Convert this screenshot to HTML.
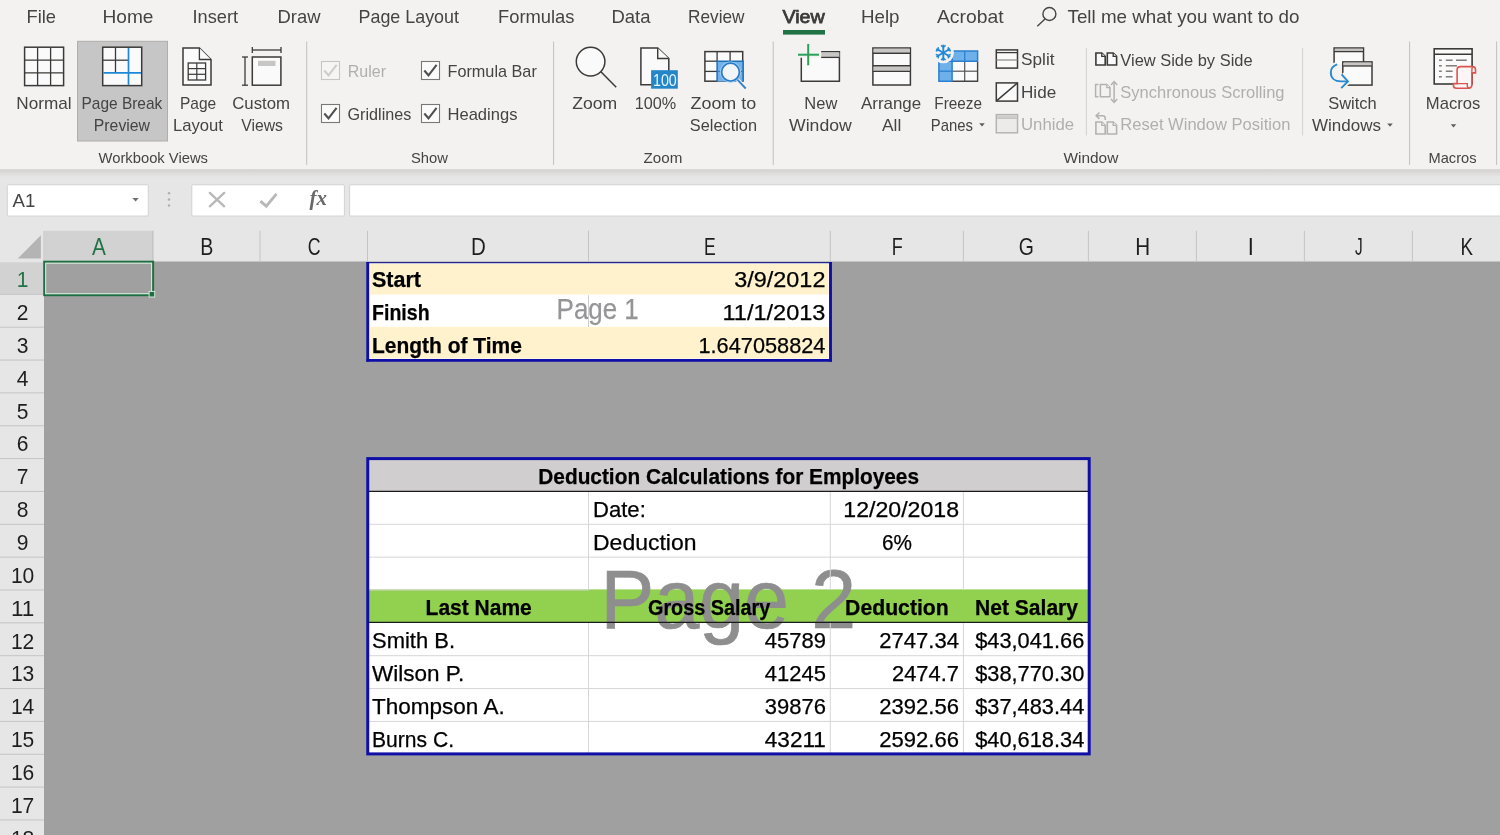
<!DOCTYPE html>
<html lang="en">
<head>
<meta charset="utf-8">
<title>Excel - Page Break Preview</title>
<style>
html,body{margin:0;padding:0;background:#a0a0a0;overflow:hidden;}
body{width:1500px;height:835px;font-family:"Liberation Sans",Arial,sans-serif;}
svg{display:block;position:absolute;left:0;top:0;will-change:transform;}
svg text{font-family:"Liberation Sans",Arial,sans-serif;white-space:pre;}
</style>
</head>
<body>
<svg width="1500" height="835" viewBox="0 0 1500 835">
<defs><linearGradient id="shadow" x1="0" y1="0" x2="0" y2="1"><stop offset="0" stop-color="#d0cecc"/><stop offset="1" stop-color="#e6e6e6"/></linearGradient></defs>
<rect x="0.00" y="0.00" width="1500.00" height="835.00" fill="#a0a0a0"/>
<rect x="0.00" y="160.00" width="1500.00" height="101.50" fill="#e6e6e6"/>
<rect x="0.00" y="168.00" width="1500.00" height="9.00" fill="url(#shadow)"/>
<rect x="0.00" y="0.00" width="1500.00" height="169.20" fill="#f3f2f1"/>
<rect x="0.00" y="261.00" width="44.00" height="574.00" fill="#e6e6e6"/>
<text x="26.5" y="23.4" font-size="19" fill="#444444" textLength="29.5" lengthAdjust="spacingAndGlyphs">File</text>
<text x="102.5" y="23.4" font-size="19" fill="#444444" textLength="51.0" lengthAdjust="spacingAndGlyphs">Home</text>
<text x="192.5" y="23.4" font-size="19" fill="#444444" textLength="45.5" lengthAdjust="spacingAndGlyphs">Insert</text>
<text x="277.5" y="23.4" font-size="19" fill="#444444" textLength="43.0" lengthAdjust="spacingAndGlyphs">Draw</text>
<text x="358.5" y="23.4" font-size="19" fill="#444444" textLength="100.5" lengthAdjust="spacingAndGlyphs">Page Layout</text>
<text x="498.0" y="23.4" font-size="19" fill="#444444" textLength="76.5" lengthAdjust="spacingAndGlyphs">Formulas</text>
<text x="611.5" y="23.4" font-size="19" fill="#444444" textLength="39.0" lengthAdjust="spacingAndGlyphs">Data</text>
<text x="688.0" y="23.4" font-size="19" fill="#444444" textLength="56.5" lengthAdjust="spacingAndGlyphs">Review</text>
<text x="861.0" y="23.4" font-size="19" fill="#444444" textLength="38.5" lengthAdjust="spacingAndGlyphs">Help</text>
<text x="937.0" y="23.4" font-size="19" fill="#444444" textLength="66.5" lengthAdjust="spacingAndGlyphs">Acrobat</text>
<text x="1067.5" y="23.4" font-size="19" fill="#444444" textLength="232.0" lengthAdjust="spacingAndGlyphs">Tell me what you want to do</text>
<text x="782.4" y="23.4" font-size="19" fill="#3a3a3a" textLength="42.4" lengthAdjust="spacingAndGlyphs" stroke="#3a3a3a" stroke-width="0.75">View</text>
<rect x="783.00" y="30.00" width="42.00" height="4.60" fill="#217346"/>
<circle cx="1049.4" cy="14" r="6.5" fill="none" stroke="#444" stroke-width="1.4"/>
<line x1="1045.00" y1="19.00" x2="1037.30" y2="26.30" stroke="#444" stroke-width="1.4"/>
<line x1="306.70" y1="41.50" x2="306.70" y2="165.00" stroke="#c2c0be" stroke-width="1"/>
<line x1="553.60" y1="41.50" x2="553.60" y2="165.00" stroke="#c2c0be" stroke-width="1"/>
<line x1="773.20" y1="41.50" x2="773.20" y2="165.00" stroke="#c2c0be" stroke-width="1"/>
<line x1="1409.60" y1="41.50" x2="1409.60" y2="165.00" stroke="#c2c0be" stroke-width="1"/>
<line x1="1496.60" y1="41.50" x2="1496.60" y2="165.00" stroke="#c2c0be" stroke-width="1"/>
<line x1="1086.40" y1="48.00" x2="1086.40" y2="135.50" stroke="#d4d2d0" stroke-width="1"/>
<line x1="1302.60" y1="48.00" x2="1302.60" y2="135.50" stroke="#d4d2d0" stroke-width="1"/>
<text x="98.5" y="163.0" font-size="14.5" fill="#444444" textLength="109.5" lengthAdjust="spacingAndGlyphs">Workbook Views</text>
<text x="411.0" y="163.0" font-size="14.5" fill="#444444" textLength="37.0" lengthAdjust="spacingAndGlyphs">Show</text>
<text x="643.5" y="163.0" font-size="14.5" fill="#444444" textLength="38.8" lengthAdjust="spacingAndGlyphs">Zoom</text>
<text x="1063.5" y="163.0" font-size="14.5" fill="#444444" textLength="54.8" lengthAdjust="spacingAndGlyphs">Window</text>
<text x="1428.5" y="163.0" font-size="14.5" fill="#444444" textLength="48.0" lengthAdjust="spacingAndGlyphs">Macros</text>
<rect x="77.50" y="41.30" width="90.00" height="99.70" fill="#c6c6c6" stroke="#b0aeac" stroke-width="1"/>
<text x="16.3" y="109.0" font-size="17" fill="#444444" textLength="55.3" lengthAdjust="spacingAndGlyphs">Normal</text>
<text x="81.5" y="109.0" font-size="17" fill="#444444" textLength="80.8" lengthAdjust="spacingAndGlyphs">Page Break</text>
<text x="93.8" y="131.0" font-size="17" fill="#444444" textLength="56.2" lengthAdjust="spacingAndGlyphs">Preview</text>
<text x="180.0" y="109.0" font-size="17" fill="#444444" textLength="36.2" lengthAdjust="spacingAndGlyphs">Page</text>
<text x="173.0" y="131.0" font-size="17" fill="#444444" textLength="50.0" lengthAdjust="spacingAndGlyphs">Layout</text>
<text x="232.2" y="109.0" font-size="17" fill="#444444" textLength="57.8" lengthAdjust="spacingAndGlyphs">Custom</text>
<text x="241.2" y="131.0" font-size="17" fill="#444444" textLength="41.8" lengthAdjust="spacingAndGlyphs">Views</text>
<text x="572.3" y="109.0" font-size="17" fill="#444444" textLength="45.0" lengthAdjust="spacingAndGlyphs">Zoom</text>
<text x="634.8" y="109.0" font-size="17" fill="#444444" textLength="41.4" lengthAdjust="spacingAndGlyphs">100%</text>
<text x="690.5" y="109.0" font-size="17" fill="#444444" textLength="65.7" lengthAdjust="spacingAndGlyphs">Zoom to</text>
<text x="689.8" y="131.0" font-size="17" fill="#444444" textLength="67.2" lengthAdjust="spacingAndGlyphs">Selection</text>
<text x="804.3" y="109.0" font-size="17" fill="#444444" textLength="33.0" lengthAdjust="spacingAndGlyphs">New</text>
<text x="789.0" y="131.0" font-size="17" fill="#444444" textLength="62.8" lengthAdjust="spacingAndGlyphs">Window</text>
<text x="861.0" y="109.0" font-size="17" fill="#444444" textLength="60.2" lengthAdjust="spacingAndGlyphs">Arrange</text>
<text x="882.0" y="131.0" font-size="17" fill="#444444" textLength="19.3" lengthAdjust="spacingAndGlyphs">All</text>
<text x="934.3" y="109.0" font-size="17" fill="#444444" textLength="47.7" lengthAdjust="spacingAndGlyphs">Freeze</text>
<text x="930.8" y="131.0" font-size="17" fill="#444444" textLength="42.2" lengthAdjust="spacingAndGlyphs">Panes</text>
<text x="1328.2" y="109.0" font-size="17" fill="#444444" textLength="48.5" lengthAdjust="spacingAndGlyphs">Switch</text>
<text x="1312.0" y="131.0" font-size="17" fill="#444444" textLength="69.0" lengthAdjust="spacingAndGlyphs">Windows</text>
<text x="1425.8" y="109.0" font-size="17" fill="#444444" textLength="54.5" lengthAdjust="spacingAndGlyphs">Macros</text>
<path d="M979.20 123.20h5.6l-2.80 3.2z" fill="#605e5c"/>
<path d="M1387.20 123.60h5.6l-2.80 3.2z" fill="#605e5c"/>
<path d="M1450.70 124.20h5.6l-2.80 3.2z" fill="#605e5c"/>
<text x="1021.0" y="65.0" font-size="17" fill="#444444" textLength="33.5" lengthAdjust="spacingAndGlyphs">Split</text>
<text x="1021.0" y="98.0" font-size="17" fill="#444444" textLength="35.2" lengthAdjust="spacingAndGlyphs">Hide</text>
<text x="1021.0" y="130.0" font-size="17" fill="#b1afad" textLength="53.2" lengthAdjust="spacingAndGlyphs">Unhide</text>
<text x="1120.3" y="66.0" font-size="17" fill="#444444" textLength="132.3" lengthAdjust="spacingAndGlyphs">View Side by Side</text>
<text x="1120.3" y="98.0" font-size="17" fill="#b1afad" textLength="164.2" lengthAdjust="spacingAndGlyphs">Synchronous Scrolling</text>
<text x="1120.3" y="130.0" font-size="17" fill="#b1afad" textLength="170.1" lengthAdjust="spacingAndGlyphs">Reset Window Position</text>
<rect x="321.50" y="61.50" width="18.00" height="18.00" fill="#f6f5f4" stroke="#c8c6c4" stroke-width="1.1"/>
<path d="M324.3 70.5l4.2 4.8l8.1 -10.5" fill="none" stroke="#cfcdcb" stroke-width="2.1"/>
<text x="347.8" y="77.0" font-size="17" fill="#b1afad" textLength="38.2" lengthAdjust="spacingAndGlyphs">Ruler</text>
<rect x="421.50" y="61.50" width="18.00" height="18.00" fill="#fbfbfb" stroke="#7a7876" stroke-width="1.1"/>
<path d="M424.3 70.5l4.2 4.8l8.1 -10.5" fill="none" stroke="#505050" stroke-width="2.1"/>
<text x="447.5" y="77.0" font-size="17" fill="#444444" textLength="89.3" lengthAdjust="spacingAndGlyphs">Formula Bar</text>
<rect x="321.50" y="104.50" width="18.00" height="18.00" fill="#fbfbfb" stroke="#7a7876" stroke-width="1.1"/>
<path d="M324.3 113.5l4.2 4.8l8.1 -10.5" fill="none" stroke="#505050" stroke-width="2.1"/>
<text x="347.5" y="120.0" font-size="17" fill="#444444" textLength="63.8" lengthAdjust="spacingAndGlyphs">Gridlines</text>
<rect x="421.50" y="104.50" width="18.00" height="18.00" fill="#fbfbfb" stroke="#7a7876" stroke-width="1.1"/>
<path d="M424.3 113.5l4.2 4.8l8.1 -10.5" fill="none" stroke="#505050" stroke-width="2.1"/>
<text x="447.5" y="120.0" font-size="17" fill="#444444" textLength="69.9" lengthAdjust="spacingAndGlyphs">Headings</text>
<rect x="24.60" y="47.20" width="39.00" height="38.40" fill="#fafafa" stroke="#3b3a39" stroke-width="1.5"/>
<line x1="37.60" y1="47.20" x2="37.60" y2="85.60" stroke="#3b3a39" stroke-width="1.3"/>
<line x1="50.60" y1="47.20" x2="50.60" y2="85.60" stroke="#3b3a39" stroke-width="1.3"/>
<line x1="24.60" y1="60.20" x2="63.60" y2="60.20" stroke="#3b3a39" stroke-width="1.3"/>
<line x1="24.60" y1="72.80" x2="63.60" y2="72.80" stroke="#3b3a39" stroke-width="1.3"/>
<rect x="102.70" y="47.20" width="39.00" height="38.40" fill="#fafafa" stroke="#3b3a39" stroke-width="1.5"/>
<line x1="115.50" y1="47.20" x2="115.50" y2="72.80" stroke="#3b3a39" stroke-width="1.3"/>
<line x1="102.70" y1="60.20" x2="128.30" y2="60.20" stroke="#3b3a39" stroke-width="1.3"/>
<line x1="128.50" y1="47.90" x2="128.50" y2="84.90" stroke="#1e88d8" stroke-width="1.7"/>
<line x1="103.40" y1="72.80" x2="141.00" y2="72.80" stroke="#1e88d8" stroke-width="1.7"/>
<path d="M183 48.1h16.4l11.6 11.4v25.4h-28z" fill="#fafafa" stroke="#3b3a39" stroke-width="1.5"/>
<path d="M199.4 48.1v11.4h11.6" fill="#fafafa" stroke="#3b3a39" stroke-width="1.3"/>
<rect x="188.20" y="63.00" width="17.40" height="17.00" fill="none" stroke="#3b3a39" stroke-width="1.3"/>
<line x1="196.80" y1="63.00" x2="196.80" y2="80.00" stroke="#3b3a39" stroke-width="1.2"/>
<line x1="188.20" y1="68.60" x2="205.60" y2="68.60" stroke="#3b3a39" stroke-width="1.2"/>
<line x1="188.20" y1="74.30" x2="205.60" y2="74.30" stroke="#3b3a39" stroke-width="1.2"/>
<rect x="252.30" y="57.00" width="28.60" height="28.20" fill="#fafafa" stroke="#3b3a39" stroke-width="1.5"/>
<rect x="258.00" y="60.80" width="17.50" height="5.20" fill="#c8c6c4"/>
<line x1="252.30" y1="50.00" x2="281.00" y2="50.00" stroke="#3b3a39" stroke-width="1.3"/>
<line x1="252.30" y1="47.00" x2="252.30" y2="53.00" stroke="#3b3a39" stroke-width="1.3"/>
<line x1="281.00" y1="47.00" x2="281.00" y2="53.00" stroke="#3b3a39" stroke-width="1.3"/>
<line x1="245.00" y1="57.00" x2="245.00" y2="85.20" stroke="#3b3a39" stroke-width="1.3"/>
<line x1="242.00" y1="57.00" x2="248.00" y2="57.00" stroke="#3b3a39" stroke-width="1.3"/>
<line x1="242.00" y1="85.20" x2="248.00" y2="85.20" stroke="#3b3a39" stroke-width="1.3"/>
<circle cx="590.6" cy="61.6" r="14.3" fill="#fafafa" stroke="#3b3a39" stroke-width="1.5"/>
<line x1="600.90" y1="71.70" x2="616.20" y2="87.20" stroke="#3b3a39" stroke-width="1.5"/>
<path d="M640.9 48.1h16.8l11.1 10.4v26.3h-27.9z" fill="#fafafa" stroke="#3b3a39" stroke-width="1.5"/>
<path d="M657.7 48.1v10.4h11.1" fill="#fafafa" stroke="#3b3a39" stroke-width="1.4"/>
<rect x="651.10" y="70.20" width="26.70" height="18.50" fill="#2486c8"/>
<text x="653.0" y="86.0" font-size="17.4" fill="#e8f6ff" textLength="23.8" lengthAdjust="spacingAndGlyphs">100</text>
<rect x="704.90" y="51.60" width="37.80" height="29.60" fill="#fafafa" stroke="#3b3a39" stroke-width="1.5"/>
<rect x="717.10" y="61.20" width="26.00" height="20.40" fill="#72b2ea"/>
<line x1="717.10" y1="51.60" x2="717.10" y2="61.00" stroke="#3b3a39" stroke-width="1.3"/>
<line x1="730.10" y1="51.60" x2="730.10" y2="61.00" stroke="#3b3a39" stroke-width="1.3"/>
<line x1="704.90" y1="61.20" x2="717.00" y2="61.20" stroke="#3b3a39" stroke-width="1.3"/>
<line x1="704.90" y1="71.40" x2="717.00" y2="71.40" stroke="#3b3a39" stroke-width="1.3"/>
<path d="M717.1 81.6V61.2H743.1V81.6" fill="none" stroke="#1e70b8" stroke-width="1.5"/>
<line x1="717.10" y1="71.40" x2="722.00" y2="71.40" stroke="#2a7cc4" stroke-width="1.1"/>
<line x1="730.10" y1="61.20" x2="730.10" y2="63.40" stroke="#2a7cc4" stroke-width="1.1"/>
<line x1="740.00" y1="71.40" x2="743.00" y2="71.40" stroke="#2a7cc4" stroke-width="1.1"/>
<line x1="737.30" y1="79.60" x2="745.70" y2="88.50" stroke="#f3f2f1" stroke-width="4"/>
<circle cx="730.5" cy="72.1" r="10.6" fill="#9ccaf2"/>
<circle cx="730.5" cy="72.1" r="8.9" fill="#f2f5f8" stroke="#2a7cc4" stroke-width="1.7"/>
<line x1="737.40" y1="79.70" x2="745.70" y2="88.50" stroke="#3484c8" stroke-width="1.9"/>
<path d="M801.3 57.8V81.2H839.4V51.7H821.2V57.8z" fill="#fafafa"/>
<path d="M801.3 57.8V81.2H839.4V51.7H821.2" fill="none" stroke="#3b3a39" stroke-width="1.5"/>
<rect x="821.20" y="52.40" width="18.20" height="4.90" fill="#c8c6c4"/>
<line x1="821.20" y1="57.40" x2="839.40" y2="57.40" stroke="#3b3a39" stroke-width="1.3"/>
<line x1="798.00" y1="54.70" x2="819.00" y2="54.70" stroke="#2ca05a" stroke-width="2"/>
<line x1="808.20" y1="43.90" x2="808.20" y2="65.30" stroke="#2ca05a" stroke-width="2"/>
<rect x="872.90" y="48.00" width="37.50" height="37.00" fill="#fafafa" stroke="#3b3a39" stroke-width="1.5"/>
<rect x="873.60" y="48.70" width="36.10" height="4.00" fill="#c8c6c4"/>
<rect x="873.60" y="66.40" width="36.10" height="4.60" fill="#c8c6c4"/>
<line x1="872.90" y1="53.20" x2="910.40" y2="53.20" stroke="#3b3a39" stroke-width="1.4"/>
<line x1="872.90" y1="65.80" x2="910.40" y2="65.80" stroke="#3b3a39" stroke-width="1.6"/>
<line x1="872.90" y1="71.40" x2="910.40" y2="71.40" stroke="#3b3a39" stroke-width="1.4"/>
<rect x="938.90" y="51.00" width="38.70" height="30.30" fill="#fafafa"/>
<rect x="938.90" y="51.00" width="38.70" height="10.20" fill="#6eb0ea"/>
<rect x="938.90" y="51.00" width="13.20" height="30.30" fill="#6eb0ea"/>
<line x1="964.70" y1="61.20" x2="964.70" y2="81.30" stroke="#555555" stroke-width="1.2"/>
<line x1="952.10" y1="71.20" x2="977.60" y2="71.20" stroke="#555555" stroke-width="1.2"/>
<path d="M952.1 81.3H977.6V61.2" fill="none" stroke="#444" stroke-width="1.4"/>
<path d="M952.1 81.3H938.9V51H977.6V61.2" fill="none" stroke="#2a80d0" stroke-width="1.5"/>
<line x1="952.10" y1="51.00" x2="952.10" y2="81.30" stroke="#2a80d0" stroke-width="1.5"/>
<line x1="938.90" y1="61.20" x2="977.60" y2="61.20" stroke="#2a80d0" stroke-width="1.5"/>
<line x1="964.70" y1="51.00" x2="964.70" y2="61.20" stroke="#2a80d0" stroke-width="1.3"/>
<line x1="938.90" y1="71.20" x2="952.10" y2="71.20" stroke="#2a80d0" stroke-width="1.3"/>
<circle cx="943.3" cy="52.7" r="10.6" fill="#f3f2f1"/>
<line x1="943.30" y1="44.70" x2="943.30" y2="60.70" stroke="#2488d8" stroke-width="1.9"/>
<line x1="936.37" y1="48.70" x2="950.23" y2="56.70" stroke="#2488d8" stroke-width="1.9"/>
<line x1="950.23" y1="48.70" x2="936.37" y2="56.70" stroke="#2488d8" stroke-width="1.9"/>
<line x1="947.98" y1="55.40" x2="950.80" y2="54.37" stroke="#2488d8" stroke-width="1.4"/>
<line x1="947.98" y1="55.40" x2="948.50" y2="58.35" stroke="#2488d8" stroke-width="1.4"/>
<line x1="943.30" y1="58.10" x2="945.60" y2="60.03" stroke="#2488d8" stroke-width="1.4"/>
<line x1="943.30" y1="58.10" x2="941.00" y2="60.03" stroke="#2488d8" stroke-width="1.4"/>
<line x1="938.62" y1="55.40" x2="938.10" y2="58.35" stroke="#2488d8" stroke-width="1.4"/>
<line x1="938.62" y1="55.40" x2="935.80" y2="54.37" stroke="#2488d8" stroke-width="1.4"/>
<line x1="938.62" y1="50.00" x2="935.80" y2="51.03" stroke="#2488d8" stroke-width="1.4"/>
<line x1="938.62" y1="50.00" x2="938.10" y2="47.05" stroke="#2488d8" stroke-width="1.4"/>
<line x1="943.30" y1="47.30" x2="941.00" y2="45.37" stroke="#2488d8" stroke-width="1.4"/>
<line x1="943.30" y1="47.30" x2="945.60" y2="45.37" stroke="#2488d8" stroke-width="1.4"/>
<line x1="947.98" y1="50.00" x2="948.50" y2="47.05" stroke="#2488d8" stroke-width="1.4"/>
<line x1="947.98" y1="50.00" x2="950.80" y2="51.03" stroke="#2488d8" stroke-width="1.4"/>
<rect x="996.30" y="49.90" width="21.20" height="18.20" fill="#fafafa" stroke="#3b3a39" stroke-width="1.5"/>
<line x1="996.30" y1="52.60" x2="1017.50" y2="52.60" stroke="#3b3a39" stroke-width="1.3"/>
<line x1="996.30" y1="60.00" x2="1017.50" y2="60.00" stroke="#8a8886" stroke-width="1.2"/>
<rect x="996.30" y="82.90" width="21.20" height="18.20" fill="#fafafa" stroke="#3b3a39" stroke-width="1.5"/>
<line x1="996.80" y1="100.60" x2="1017.00" y2="83.40" stroke="#3b3a39" stroke-width="1.4"/>
<rect x="996.30" y="114.60" width="21.20" height="18.20" fill="#ecebea" stroke="#b6b4b2" stroke-width="1.5"/>
<rect x="997.00" y="115.30" width="19.80" height="3.00" fill="#cfcdcb"/>
<line x1="996.30" y1="118.40" x2="1017.50" y2="118.40" stroke="#c2c0be" stroke-width="1"/>
<path d="M1095.9 53h5.9l3.4 3.4v8.6h-9.3z" fill="#fafafa" stroke="#3b3a39" stroke-width="1.6"/>
<path d="M1101.8 53v3.4h3.4" fill="#fafafa" stroke="#3b3a39" stroke-width="1.36"/>
<path d="M1107.3 53h5.9l3.4 3.4v8.6h-9.3z" fill="#fafafa" stroke="#3b3a39" stroke-width="1.6"/>
<path d="M1113.1999999999998 53v3.4h3.4" fill="#fafafa" stroke="#3b3a39" stroke-width="1.36"/>
<path d="M1098.4 84.4h-2.8v12.4h2.8" fill="none" stroke="#b4b2b0" stroke-width="1.5"/>
<path d="M1100.4 84.4h6.3999999999999995l3.2 3.2v9.2h-9.6z" fill="#f3f2f1" stroke="#b4b2b0" stroke-width="1.5"/>
<path d="M1106.8 84.4v3.2h3.2" fill="#f3f2f1" stroke="#b4b2b0" stroke-width="1.275"/>
<line x1="1114.10" y1="81.80" x2="1114.10" y2="102.20" stroke="#b4b2b0" stroke-width="1.5"/>
<path d="M1111 85l3.1-3.4l3.1 3.4" fill="none" stroke="#b4b2b0" stroke-width="1.5"/>
<path d="M1111 99l3.1 3.4l3.1-3.4" fill="none" stroke="#b4b2b0" stroke-width="1.5"/>
<path d="M1095.9 122h5.9l3.4 3.4v8.6h-9.3z" fill="#f3f2f1" stroke="#b4b2b0" stroke-width="1.6"/>
<path d="M1101.8 122v3.4h3.4" fill="#f3f2f1" stroke="#b4b2b0" stroke-width="1.36"/>
<path d="M1107.3 122h5.9l3.4 3.4v8.6h-9.3z" fill="#f3f2f1" stroke="#b4b2b0" stroke-width="1.6"/>
<path d="M1113.1999999999998 122v3.4h3.4" fill="#f3f2f1" stroke="#b4b2b0" stroke-width="1.36"/>
<path d="M1105.3 120v-1.6q0-2.7-2.8-2.7h-6" fill="none" stroke="#b4b2b0" stroke-width="1.5"/>
<path d="M1099.4 112.5l-3.3 3.2l3.3 3.2" fill="none" stroke="#b4b2b0" stroke-width="1.5"/>
<rect x="1334.10" y="48.00" width="29.40" height="16.00" fill="#fafafa"/>
<path d="M1334.1 63V48H1363.5V62" fill="none" stroke="#3b3a39" stroke-width="1.5"/>
<rect x="1334.80" y="48.70" width="28.00" height="3.00" fill="#c8c6c4"/>
<line x1="1334.10" y1="51.60" x2="1363.50" y2="51.60" stroke="#3b3a39" stroke-width="1.3"/>
<rect x="1342.80" y="61.90" width="29.20" height="23.20" fill="#fafafa" stroke="#3b3a39" stroke-width="1.5"/>
<rect x="1343.50" y="62.60" width="27.80" height="3.40" fill="#c8c6c4"/>
<line x1="1342.80" y1="66.00" x2="1372.00" y2="66.00" stroke="#3b3a39" stroke-width="1.3"/>
<path d="M1337.2 64.4C1332.6 66 1330.8 69 1330.8 72.4C1330.8 78 1334.8 81.4 1341 81.4H1347" fill="none" stroke="#f3f2f1" stroke-width="5.4"/>
<path d="M1341.6 74.4L1347.9 81.4L1341.2 88.2" fill="none" stroke="#f3f2f1" stroke-width="5.4"/>
<rect x="1333.00" y="72.80" width="8.00" height="16.00" fill="#f3f2f1"/>
<path d="M1337.2 64.4C1332.6 66 1330.8 69 1330.8 72.4C1330.8 78 1334.8 81.4 1341 81.4H1347" fill="none" stroke="#2a88d0" stroke-width="1.9"/>
<path d="M1341.6 74.4L1347.9 81.4L1341.2 88.2" fill="none" stroke="#2a88d0" stroke-width="1.9"/>
<rect x="1434.20" y="48.80" width="37.90" height="35.20" fill="#fafafa" stroke="#3b3a39" stroke-width="1.6"/>
<line x1="1434.20" y1="54.20" x2="1472.10" y2="54.20" stroke="#3b3a39" stroke-width="1.4"/>
<line x1="1439.00" y1="60.20" x2="1441.80" y2="60.20" stroke="#6a6866" stroke-width="1.3"/>
<line x1="1445.80" y1="60.20" x2="1452.60" y2="60.20" stroke="#6a6866" stroke-width="1.3"/>
<line x1="1456.00" y1="60.20" x2="1466.80" y2="60.20" stroke="#6a6866" stroke-width="1.3"/>
<line x1="1439.00" y1="65.80" x2="1441.80" y2="65.80" stroke="#6a6866" stroke-width="1.3"/>
<line x1="1445.80" y1="65.80" x2="1457.00" y2="65.80" stroke="#6a6866" stroke-width="1.3"/>
<line x1="1439.00" y1="71.20" x2="1441.80" y2="71.20" stroke="#6a6866" stroke-width="1.3"/>
<line x1="1445.80" y1="71.20" x2="1452.60" y2="71.20" stroke="#6a6866" stroke-width="1.3"/>
<line x1="1439.00" y1="76.80" x2="1441.80" y2="76.80" stroke="#6a6866" stroke-width="1.3"/>
<line x1="1445.80" y1="76.80" x2="1452.60" y2="76.80" stroke="#6a6866" stroke-width="1.3"/>
<path d="M1457.1 83.6V69.8Q1457.1 66.6 1460.3 66.6H1472.4Q1475.5 66.6 1475.5 69.6V72.9H1471.9V84.6Q1471.9 88.2 1468.4 88.2H1456.4Q1453.5 88.2 1453.5 85.8V83.6z" fill="#fbf6f5" stroke="#dc5450" stroke-width="1.6"/>
<path d="M1457.1 83.6H1467.3V85.6Q1467.3 88.2 1469.2 88.2" fill="none" stroke="#dc5450" stroke-width="1.4"/>
<path d="M1471.9 72.9V69.8Q1471.9 66.6 1473.2 66.6" fill="none" stroke="#dc5450" stroke-width="1.4"/>
<rect x="7.3" y="184.8" width="141" height="31.2" rx="1" fill="#ffffff" stroke="#d2d2d2" stroke-width="1"/>
<text x="12.6" y="207.0" font-size="18.5" fill="#444444" textLength="22.8" lengthAdjust="spacingAndGlyphs">A1</text>
<path d="M132.40 198.00h6.4l-3.20 3.4z" fill="#6e6e6e"/>
<circle cx="169" cy="193.3" r="1.25" fill="#b0b0b0"/>
<circle cx="169" cy="199.4" r="1.25" fill="#b0b0b0"/>
<circle cx="169" cy="205.4" r="1.25" fill="#b0b0b0"/>
<rect x="191.8" y="184.8" width="152.6" height="31.2" rx="1" fill="#ffffff" stroke="#d2d2d2" stroke-width="1"/>
<line x1="209.80" y1="192.90" x2="224.20" y2="206.30" stroke="#b8b8b8" stroke-width="2.3" stroke-linecap="round"/>
<line x1="224.20" y1="192.90" x2="209.80" y2="206.30" stroke="#b8b8b8" stroke-width="2.3" stroke-linecap="round"/>
<path d="M260.4 201.2l5.9 5l10.2 -12.4" fill="none" stroke="#b8b8b8" stroke-width="2.9" stroke-linejoin="miter"/>
<text x="309.6" y="205.2" font-size="22" font-style="italic" font-weight="bold" fill="#686868" style="font-family:'Liberation Serif','Times New Roman',serif" textLength="17.4" lengthAdjust="spacingAndGlyphs">fx</text>
<rect x="349.6" y="184.8" width="1160" height="31.2" rx="1" fill="#ffffff" stroke="#d2d2d2" stroke-width="1"/>
<rect x="44.40" y="230.80" width="108.40" height="30.40" fill="#d2d2d2"/>
<path d="M40.9 235.3V258.6H17.7z" fill="#b4b4b4"/>
<text x="91.9" y="255.0" font-size="23.2" fill="#217346" textLength="13.9" lengthAdjust="spacingAndGlyphs">A</text>
<line x1="152.80" y1="230.80" x2="152.80" y2="261.00" stroke="#c4c4c4" stroke-width="1"/>
<text x="200.3" y="255.0" font-size="23.2" fill="#1e1e1e" textLength="13.1" lengthAdjust="spacingAndGlyphs">B</text>
<line x1="260.00" y1="230.80" x2="260.00" y2="261.00" stroke="#c4c4c4" stroke-width="1"/>
<text x="307.8" y="255.0" font-size="23.2" fill="#1e1e1e" textLength="12.8" lengthAdjust="spacingAndGlyphs">C</text>
<line x1="367.50" y1="230.80" x2="367.50" y2="261.00" stroke="#c4c4c4" stroke-width="1"/>
<text x="471.0" y="255.0" font-size="23.2" fill="#1e1e1e" textLength="14.8" lengthAdjust="spacingAndGlyphs">D</text>
<line x1="588.50" y1="230.80" x2="588.50" y2="261.00" stroke="#c4c4c4" stroke-width="1"/>
<text x="703.9" y="255.0" font-size="23.2" fill="#1e1e1e" textLength="11.7" lengthAdjust="spacingAndGlyphs">E</text>
<line x1="830.30" y1="230.80" x2="830.30" y2="261.00" stroke="#c4c4c4" stroke-width="1"/>
<text x="891.7" y="255.0" font-size="23.2" fill="#1e1e1e" textLength="11.0" lengthAdjust="spacingAndGlyphs">F</text>
<line x1="963.40" y1="230.80" x2="963.40" y2="261.00" stroke="#c4c4c4" stroke-width="1"/>
<text x="1018.8" y="255.0" font-size="23.2" fill="#1e1e1e" textLength="15.1" lengthAdjust="spacingAndGlyphs">G</text>
<line x1="1088.40" y1="230.80" x2="1088.40" y2="261.00" stroke="#c4c4c4" stroke-width="1"/>
<text x="1135.3" y="255.0" font-size="23.2" fill="#1e1e1e" textLength="14.9" lengthAdjust="spacingAndGlyphs">H</text>
<line x1="1196.40" y1="230.80" x2="1196.40" y2="261.00" stroke="#c4c4c4" stroke-width="1"/>
<text x="1247.8" y="255.0" font-size="23.2" fill="#1e1e1e" textLength="6.1" lengthAdjust="spacingAndGlyphs">I</text>
<line x1="1304.40" y1="230.80" x2="1304.40" y2="261.00" stroke="#c4c4c4" stroke-width="1"/>
<text x="1355.0" y="255.0" font-size="23.2" fill="#1e1e1e" textLength="7.7" lengthAdjust="spacingAndGlyphs">J</text>
<line x1="1412.40" y1="230.80" x2="1412.40" y2="261.00" stroke="#c4c4c4" stroke-width="1"/>
<text x="1460.6" y="255.0" font-size="23.2" fill="#1e1e1e" textLength="12.5" lengthAdjust="spacingAndGlyphs">K</text>
<line x1="152.80" y1="230.80" x2="152.80" y2="261.00" stroke="#c4c4c4" stroke-width="1"/>
<rect x="0.00" y="262.30" width="43.20" height="31.60" fill="#d2d2d2"/>
<text x="16.8" y="287.1" font-size="22.6" fill="#217346" textLength="11.7" lengthAdjust="spacingAndGlyphs">1</text>
<line x1="0.00" y1="294.35" x2="44.00" y2="294.35" stroke="#c4c4c4" stroke-width="1"/>
<text x="16.8" y="320.0" font-size="22.6" fill="#1e1e1e" textLength="11.7" lengthAdjust="spacingAndGlyphs">2</text>
<line x1="0.00" y1="327.20" x2="44.00" y2="327.20" stroke="#c4c4c4" stroke-width="1"/>
<text x="16.8" y="352.8" font-size="22.6" fill="#1e1e1e" textLength="11.7" lengthAdjust="spacingAndGlyphs">3</text>
<line x1="0.00" y1="360.05" x2="44.00" y2="360.05" stroke="#c4c4c4" stroke-width="1"/>
<text x="16.8" y="385.7" font-size="22.6" fill="#1e1e1e" textLength="11.7" lengthAdjust="spacingAndGlyphs">4</text>
<line x1="0.00" y1="392.90" x2="44.00" y2="392.90" stroke="#c4c4c4" stroke-width="1"/>
<text x="16.8" y="418.5" font-size="22.6" fill="#1e1e1e" textLength="11.7" lengthAdjust="spacingAndGlyphs">5</text>
<line x1="0.00" y1="425.75" x2="44.00" y2="425.75" stroke="#c4c4c4" stroke-width="1"/>
<text x="16.8" y="451.4" font-size="22.6" fill="#1e1e1e" textLength="11.7" lengthAdjust="spacingAndGlyphs">6</text>
<line x1="0.00" y1="458.60" x2="44.00" y2="458.60" stroke="#c4c4c4" stroke-width="1"/>
<text x="16.8" y="484.2" font-size="22.6" fill="#1e1e1e" textLength="11.7" lengthAdjust="spacingAndGlyphs">7</text>
<line x1="0.00" y1="491.45" x2="44.00" y2="491.45" stroke="#c4c4c4" stroke-width="1"/>
<text x="16.8" y="517.1" font-size="22.6" fill="#1e1e1e" textLength="11.7" lengthAdjust="spacingAndGlyphs">8</text>
<line x1="0.00" y1="524.30" x2="44.00" y2="524.30" stroke="#c4c4c4" stroke-width="1"/>
<text x="16.8" y="549.9" font-size="22.6" fill="#1e1e1e" textLength="11.7" lengthAdjust="spacingAndGlyphs">9</text>
<line x1="0.00" y1="557.15" x2="44.00" y2="557.15" stroke="#c4c4c4" stroke-width="1"/>
<text x="10.9" y="582.8" font-size="22.6" fill="#1e1e1e" textLength="23.4" lengthAdjust="spacingAndGlyphs">10</text>
<line x1="0.00" y1="590.00" x2="44.00" y2="590.00" stroke="#c4c4c4" stroke-width="1"/>
<text x="10.9" y="615.6" font-size="22.6" fill="#1e1e1e" textLength="23.4" lengthAdjust="spacingAndGlyphs">11</text>
<line x1="0.00" y1="622.85" x2="44.00" y2="622.85" stroke="#c4c4c4" stroke-width="1"/>
<text x="10.9" y="648.5" font-size="22.6" fill="#1e1e1e" textLength="23.4" lengthAdjust="spacingAndGlyphs">12</text>
<line x1="0.00" y1="655.70" x2="44.00" y2="655.70" stroke="#c4c4c4" stroke-width="1"/>
<text x="10.9" y="681.3" font-size="22.6" fill="#1e1e1e" textLength="23.4" lengthAdjust="spacingAndGlyphs">13</text>
<line x1="0.00" y1="688.55" x2="44.00" y2="688.55" stroke="#c4c4c4" stroke-width="1"/>
<text x="10.9" y="714.1" font-size="22.6" fill="#1e1e1e" textLength="23.4" lengthAdjust="spacingAndGlyphs">14</text>
<line x1="0.00" y1="721.40" x2="44.00" y2="721.40" stroke="#c4c4c4" stroke-width="1"/>
<text x="10.9" y="747.0" font-size="22.6" fill="#1e1e1e" textLength="23.4" lengthAdjust="spacingAndGlyphs">15</text>
<line x1="0.00" y1="754.25" x2="44.00" y2="754.25" stroke="#c4c4c4" stroke-width="1"/>
<text x="10.9" y="779.9" font-size="22.6" fill="#1e1e1e" textLength="23.4" lengthAdjust="spacingAndGlyphs">16</text>
<line x1="0.00" y1="787.10" x2="44.00" y2="787.10" stroke="#c4c4c4" stroke-width="1"/>
<text x="10.9" y="812.7" font-size="22.6" fill="#1e1e1e" textLength="23.4" lengthAdjust="spacingAndGlyphs">17</text>
<line x1="0.00" y1="819.95" x2="44.00" y2="819.95" stroke="#c4c4c4" stroke-width="1"/>
<text x="10.9" y="845.6" font-size="22.6" fill="#1e1e1e" textLength="23.4" lengthAdjust="spacingAndGlyphs">18</text>
<line x1="44.00" y1="230.80" x2="44.00" y2="261.00" stroke="#c4c4c4" stroke-width="1"/>
<rect x="44.20" y="261.70" width="108.90" height="33.50" fill="none" stroke="#1e6e42" stroke-width="2"/>
<rect x="45.70" y="263.20" width="105.90" height="30.50" fill="none" stroke="#d8efe0" stroke-width="1"/>
<rect x="149.10" y="291.40" width="5.60" height="5.60" fill="#1e6e42" stroke="#cfe6d8" stroke-width="1"/>
<rect x="367.00" y="262.00" width="464.00" height="98.50" fill="#ffffff"/>
<rect x="370.00" y="263.80" width="458.60" height="30.70" fill="#fff2cc"/>
<rect x="370.00" y="326.90" width="458.60" height="31.60" fill="#fff2cc"/>
<text x="556.6" y="318.8" font-size="29" fill="#959597" textLength="82.2" lengthAdjust="spacingAndGlyphs" stroke="#959597" stroke-width="0.25">Page 1</text>
<line x1="588.50" y1="295.20" x2="588.50" y2="327.00" stroke="#cfcfcf" stroke-width="1"/>
<line x1="366.30" y1="262.60" x2="832.00" y2="262.60" stroke="#26268a" stroke-width="1.2"/>
<line x1="367.75" y1="262.00" x2="367.75" y2="361.70" stroke="#0f0fa8" stroke-width="2.9"/>
<line x1="830.50" y1="262.00" x2="830.50" y2="361.70" stroke="#0f0fa8" stroke-width="2.9"/>
<line x1="366.30" y1="360.30" x2="832.00" y2="360.30" stroke="#0f0fa8" stroke-width="2.8"/>
<text x="372.0" y="287.0" font-size="21.4" fill="#000" font-weight="bold" textLength="49.0" lengthAdjust="spacingAndGlyphs" stroke="#000" stroke-width="0.25">Start</text>
<text x="734.3" y="287.0" font-size="21.4" fill="#000" textLength="91.1" lengthAdjust="spacingAndGlyphs" stroke="#000" stroke-width="0.25">3/9/2012</text>
<text x="372.0" y="320.0" font-size="21.4" fill="#000" font-weight="bold" textLength="57.6" lengthAdjust="spacingAndGlyphs" stroke="#000" stroke-width="0.25">Finish</text>
<text x="722.5" y="320.0" font-size="21.4" fill="#000" textLength="102.9" lengthAdjust="spacingAndGlyphs" stroke="#000" stroke-width="0.25">11/1/2013</text>
<text x="372.0" y="353.0" font-size="21.4" fill="#000" font-weight="bold" textLength="149.8" lengthAdjust="spacingAndGlyphs" stroke="#000" stroke-width="0.25">Length of Time</text>
<text x="698.5" y="353.0" font-size="21.4" fill="#000" textLength="126.9" lengthAdjust="spacingAndGlyphs" stroke="#000" stroke-width="0.25">1.647058824</text>
<rect x="367.75" y="458.60" width="721.45" height="295.30" fill="#ffffff"/>
<rect x="367.75" y="458.60" width="721.45" height="32.85" fill="#d0cece"/>
<rect x="367.75" y="589.40" width="721.45" height="33.00" fill="#92d050"/>
<text x="600.6" y="628.2" font-size="83.4" fill="#8e8e8e" textLength="255.6" lengthAdjust="spacingAndGlyphs" stroke="#8e8e8e" stroke-width="0.7">Page 2</text>
<line x1="367.75" y1="524.30" x2="1089.20" y2="524.30" stroke="#d6d6d6" stroke-width="1"/>
<line x1="367.75" y1="557.15" x2="1089.20" y2="557.15" stroke="#d6d6d6" stroke-width="1"/>
<line x1="367.75" y1="655.70" x2="1089.20" y2="655.70" stroke="#d6d6d6" stroke-width="1"/>
<line x1="367.75" y1="688.55" x2="1089.20" y2="688.55" stroke="#d6d6d6" stroke-width="1"/>
<line x1="367.75" y1="721.40" x2="1089.20" y2="721.40" stroke="#d6d6d6" stroke-width="1"/>
<line x1="367.75" y1="590.00" x2="588.50" y2="590.00" stroke="#d6d6d6" stroke-width="1"/>
<line x1="588.50" y1="491.45" x2="588.50" y2="590.00" stroke="#d6d6d6" stroke-width="1"/>
<line x1="588.50" y1="622.85" x2="588.50" y2="753.90" stroke="#d6d6d6" stroke-width="1"/>
<line x1="830.30" y1="491.45" x2="830.30" y2="590.00" stroke="#d6d6d6" stroke-width="1"/>
<line x1="830.30" y1="622.85" x2="830.30" y2="753.90" stroke="#d6d6d6" stroke-width="1"/>
<line x1="963.40" y1="491.45" x2="963.40" y2="590.00" stroke="#d6d6d6" stroke-width="1"/>
<line x1="963.40" y1="622.85" x2="963.40" y2="753.90" stroke="#d6d6d6" stroke-width="1"/>
<line x1="367.75" y1="491.30" x2="1089.20" y2="491.30" stroke="#1a1a1a" stroke-width="1.3"/>
<line x1="367.75" y1="622.40" x2="1089.20" y2="622.40" stroke="#1a1a1a" stroke-width="1.3"/>
<text x="538.3" y="484.0" font-size="21.4" fill="#000" font-weight="bold" textLength="380.7" lengthAdjust="spacingAndGlyphs" stroke="#000" stroke-width="0.25">Deduction Calculations for Employees</text>
<text x="593.0" y="517.0" font-size="21.4" fill="#000" textLength="52.8" lengthAdjust="spacingAndGlyphs" stroke="#000" stroke-width="0.25">Date:</text>
<text x="843.3" y="517.0" font-size="21.4" fill="#000" textLength="115.7" lengthAdjust="spacingAndGlyphs" stroke="#000" stroke-width="0.25">12/20/2018</text>
<text x="593.0" y="550.0" font-size="21.4" fill="#000" textLength="103.5" lengthAdjust="spacingAndGlyphs" stroke="#000" stroke-width="0.25">Deduction</text>
<text x="882.0" y="550.0" font-size="21.4" fill="#000" textLength="30.0" lengthAdjust="spacingAndGlyphs" stroke="#000" stroke-width="0.25">6%</text>
<text x="425.6" y="615.0" font-size="21.4" fill="#000" font-weight="bold" textLength="106.2" lengthAdjust="spacingAndGlyphs" stroke="#000" stroke-width="0.25">Last Name</text>
<text x="648.0" y="615.0" font-size="21.4" fill="#000" font-weight="bold" textLength="122.2" lengthAdjust="spacingAndGlyphs" stroke="#000" stroke-width="0.25">Gross Salary</text>
<text x="845.1" y="615.0" font-size="21.4" fill="#000" font-weight="bold" textLength="103.7" lengthAdjust="spacingAndGlyphs" stroke="#000" stroke-width="0.25">Deduction</text>
<text x="975.1" y="615.0" font-size="21.4" fill="#000" font-weight="bold" textLength="102.9" lengthAdjust="spacingAndGlyphs" stroke="#000" stroke-width="0.25">Net Salary</text>
<text x="372.0" y="648.0" font-size="21.4" fill="#000" textLength="83.0" lengthAdjust="spacingAndGlyphs" stroke="#000" stroke-width="0.25">Smith B.</text>
<text x="764.8" y="648.0" font-size="21.4" fill="#000" textLength="61.1" lengthAdjust="spacingAndGlyphs" stroke="#000" stroke-width="0.25">45789</text>
<text x="879.3" y="648.0" font-size="21.4" fill="#000" textLength="79.7" lengthAdjust="spacingAndGlyphs" stroke="#000" stroke-width="0.25">2747.34</text>
<text x="975.2" y="648.0" font-size="21.4" fill="#000" textLength="109.1" lengthAdjust="spacingAndGlyphs" stroke="#000" stroke-width="0.25">$43,041.66</text>
<text x="372.0" y="681.0" font-size="21.4" fill="#000" textLength="92.2" lengthAdjust="spacingAndGlyphs" stroke="#000" stroke-width="0.25">Wilson P.</text>
<text x="764.8" y="681.0" font-size="21.4" fill="#000" textLength="61.1" lengthAdjust="spacingAndGlyphs" stroke="#000" stroke-width="0.25">41245</text>
<text x="892.0" y="681.0" font-size="21.4" fill="#000" textLength="67.0" lengthAdjust="spacingAndGlyphs" stroke="#000" stroke-width="0.25">2474.7</text>
<text x="975.2" y="681.0" font-size="21.4" fill="#000" textLength="109.1" lengthAdjust="spacingAndGlyphs" stroke="#000" stroke-width="0.25">$38,770.30</text>
<text x="372.0" y="714.0" font-size="21.4" fill="#000" textLength="132.7" lengthAdjust="spacingAndGlyphs" stroke="#000" stroke-width="0.25">Thompson A.</text>
<text x="764.8" y="714.0" font-size="21.4" fill="#000" textLength="61.1" lengthAdjust="spacingAndGlyphs" stroke="#000" stroke-width="0.25">39876</text>
<text x="879.3" y="714.0" font-size="21.4" fill="#000" textLength="79.7" lengthAdjust="spacingAndGlyphs" stroke="#000" stroke-width="0.25">2392.56</text>
<text x="975.2" y="714.0" font-size="21.4" fill="#000" textLength="109.1" lengthAdjust="spacingAndGlyphs" stroke="#000" stroke-width="0.25">$37,483.44</text>
<text x="372.0" y="747.0" font-size="21.4" fill="#000" textLength="82.0" lengthAdjust="spacingAndGlyphs" stroke="#000" stroke-width="0.25">Burns C.</text>
<text x="764.8" y="747.0" font-size="21.4" fill="#000" textLength="61.1" lengthAdjust="spacingAndGlyphs" stroke="#000" stroke-width="0.25">43211</text>
<text x="879.3" y="747.0" font-size="21.4" fill="#000" textLength="79.7" lengthAdjust="spacingAndGlyphs" stroke="#000" stroke-width="0.25">2592.66</text>
<text x="975.2" y="747.0" font-size="21.4" fill="#000" textLength="109.1" lengthAdjust="spacingAndGlyphs" stroke="#000" stroke-width="0.25">$40,618.34</text>
<rect x="367.75" y="458.60" width="721.45" height="295.30" fill="none" stroke="#0f0fa8" stroke-width="3"/>
</svg>
</body>
</html>
